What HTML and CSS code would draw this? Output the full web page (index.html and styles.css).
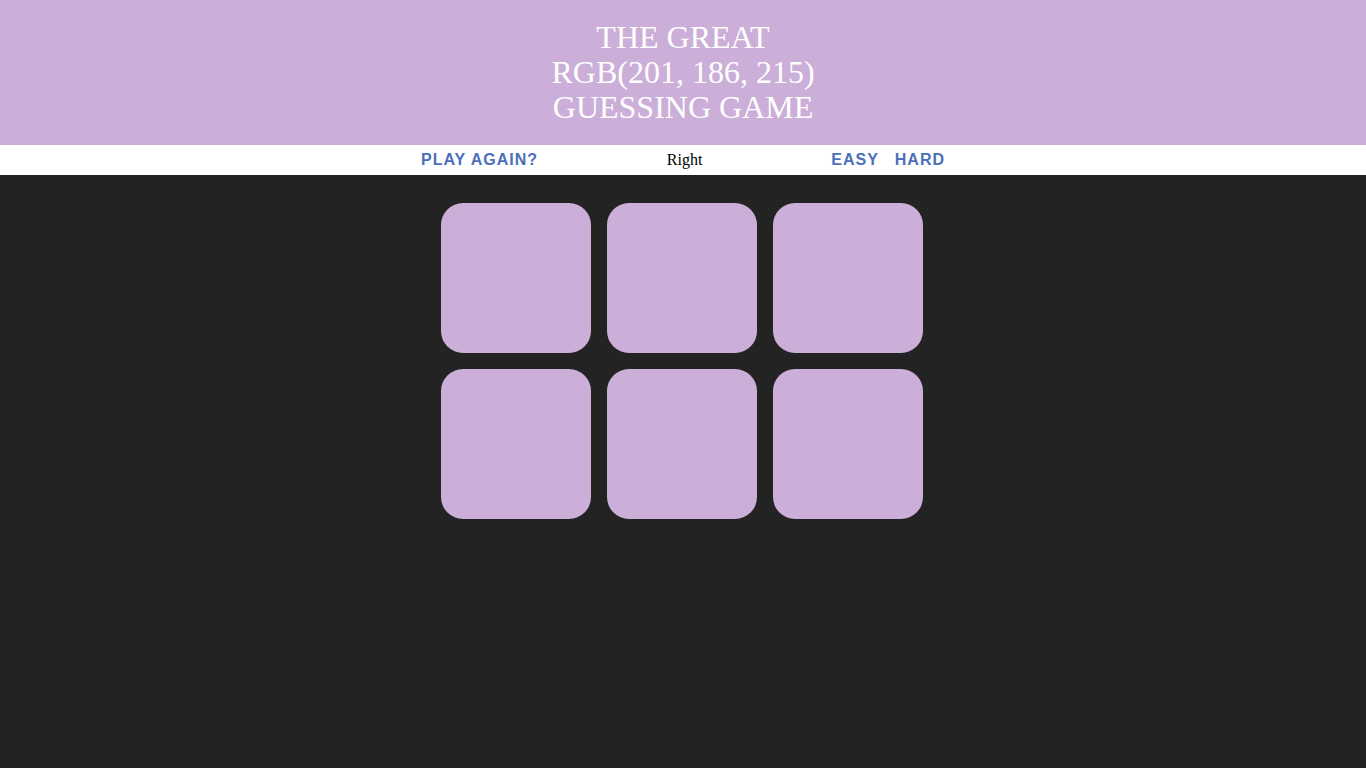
FILE: index.html
```html
<!DOCTYPE html>
<html>
<head>
<meta charset="utf-8">
<title>Color Game</title>
<link rel="stylesheet" href="styles.css">
</head>
<body>
<h1 class="title">The Great<br><span class="color-display">RGB(201, 186, 215)</span><br>Guessing Game</h1>
<div class="stripe">
  <button class="btn">Play Again?</button>
  <span class="message">Right</span>
  <button class="btn">Easy</button>
  <button class="btn">Hard</button>
</div>
<div class="container">
  <div class="square"></div>
  <div class="square"></div>
  <div class="square"></div>
  <div class="square"></div>
  <div class="square"></div>
  <div class="square"></div>
</div>
</body>
</html>
```
FILE: styles.css
```css
body {
  background-color: #232323;
  margin: 0;
  font-family: "Liberation Serif", serif;
}
.title {
  text-align: center;
  line-height: 35px;
  font-weight: normal;
  font-size: 32px;
  color: #fff;
  background: #ccafd8;
  margin: 0;
  text-transform: uppercase;
  padding: 20px 0;
}
.stripe {
  background: #fff;
  height: 30px;
  text-align: center;
  color: #000;
  font-size: 16px;
}
.message {
  display: inline-block;
  width: 20%;
  line-height: 30px;
}
.btn {
  border: none;
  background: none;
  text-transform: uppercase;
  height: 100%;
  font-family: "Liberation Sans", Arial, sans-serif;
  font-weight: 700;
  color: #4b6fba;
  letter-spacing: 1px;
  font-size: 16px;
  padding: 1px 6px;
  outline: none;
}
.container {
  margin: 20px auto;
  width: 500px;
  display: flex;
  flex-wrap: wrap;
}
.square {
  width: 150px;
  height: 150px;
  margin: 8px;
  background: #ccafd8;
  border-radius: 22px;
}
```
